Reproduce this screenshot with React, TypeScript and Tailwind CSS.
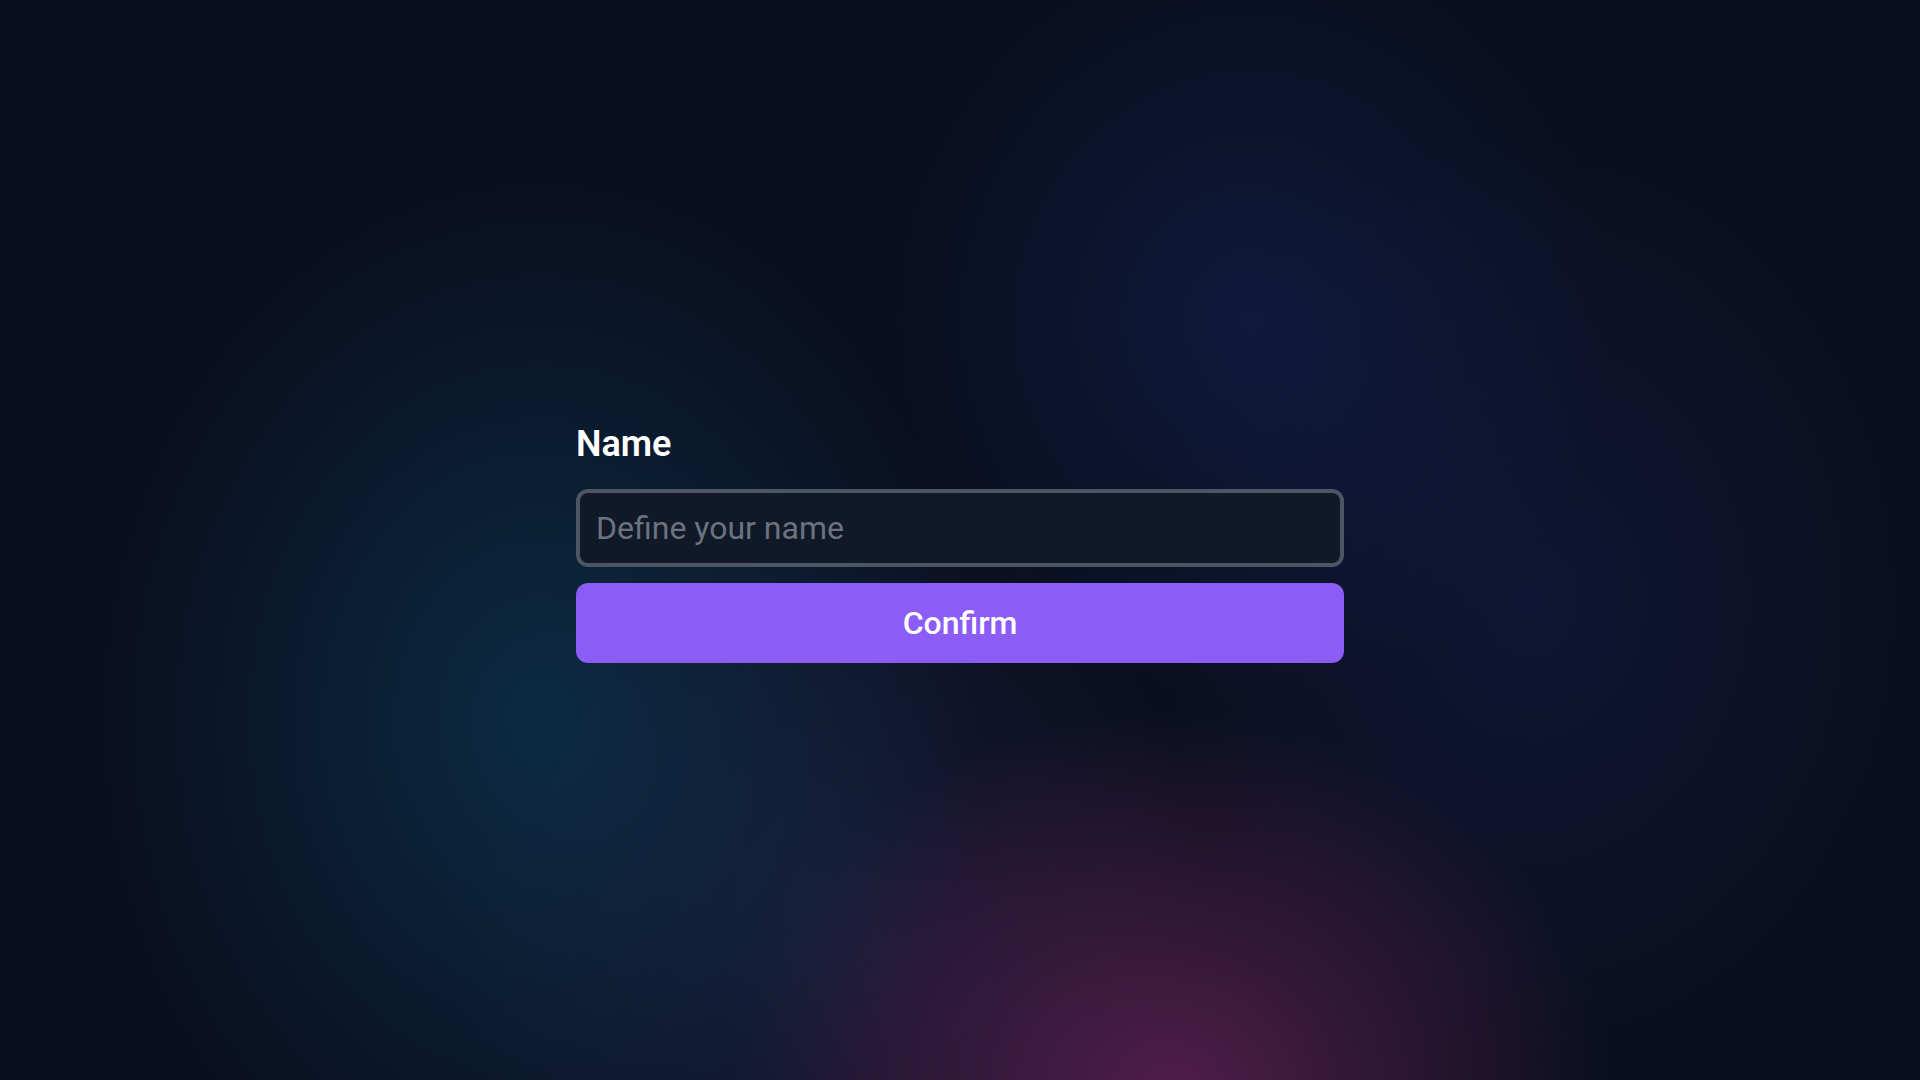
import { useState } from 'react';

const App = () => {
  const [name, setName] = useState('');

  return (
    <div className="min-h-screen w-full bg-[#0a0f1f] bg-[radial-gradient(ellipse_440px_540px_at_540px_720px,rgba(12,50,76,0.78),transparent),radial-gradient(ellipse_440px_380px_at_1170px_1090px,rgba(92,32,80,0.85),transparent),radial-gradient(ellipse_380px_420px_at_820px_900px,rgba(42,38,80,0.45),transparent),radial-gradient(ellipse_360px_380px_at_1250px_320px,rgba(18,32,78,0.6),transparent),radial-gradient(ellipse_380px_460px_at_1530px_600px,rgba(22,28,72,0.5),transparent)] font-['Roboto',sans-serif] flex items-center justify-center">
      <form
        className="w-[768px] mt-[6px] flex flex-col"
        onSubmit={(e) => e.preventDefault()}
      >
        <label htmlFor="name" className="text-4xl font-semibold text-white mb-[25px]">
          Name
        </label>
        <input
          id="name"
          type="text"
          value={name}
          onChange={(e) => setName(e.target.value)}
          placeholder="Define your name"
          className="w-full h-[78px] rounded-xl border-4 border-[#4b5563] bg-[#111827] px-4 text-[32px] text-white placeholder:text-[#6b7280] outline-none"
        />
        <button
          type="submit"
          className="mt-4 w-full h-20 rounded-xl bg-[#8b5cf6] text-[32px] font-medium text-white"
        >
          Confirm
        </button>
      </form>
    </div>
  );
};

export default App;
